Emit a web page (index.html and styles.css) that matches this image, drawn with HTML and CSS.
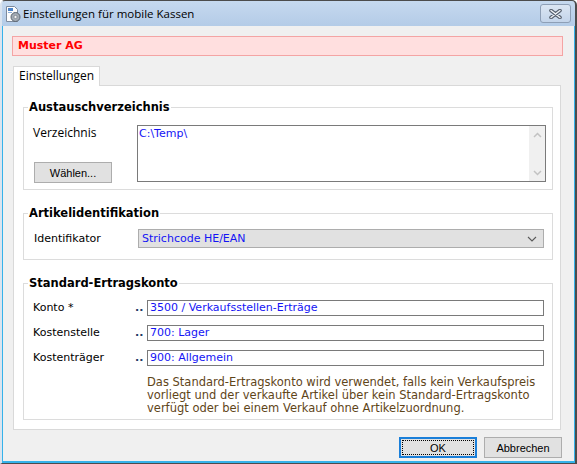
FILE: index.html
```html
<!DOCTYPE html>
<html lang="de">
<head>
    <meta charset="UTF-8">
    <title>Einstellungen für mobile Kassen</title>
    <link rel="stylesheet" href="styles.css">
</head>
<body>
    <div class="window">
        <div class="titlebar">
            <svg class="app-icon" width="16" height="16" viewBox="0 0 16 16">
                <path d="M1.5 0.5 H9.5 L12.5 3.5 V15.5 H1.5 Z" fill="#fdfdfd" stroke="#7d8a9c"/>
                <rect x="3" y="2" width="5" height="3" fill="#4d84c8"/>
                <rect x="3" y="6" width="4" height="1" fill="#8fb0d8"/>
                <circle cx="10.5" cy="11" r="4.5" fill="#a3abb4" stroke="#5b6570"/>
                <circle cx="10.5" cy="11" r="1.6" fill="#f4f4f4" stroke="#6b747e" stroke-width="0.6"/>
            </svg>
            <span class="title">Einstellungen für mobile Kassen</span>
            <div class="close-btn">
                <svg width="13" height="10" viewBox="0 0 13 10">
                    <path d="M2 1.5 L11 8.5 M11 1.5 L2 8.5" stroke="#56606e" stroke-width="3.6" stroke-linecap="round"/>
                    <path d="M2 1.5 L11 8.5 M11 1.5 L2 8.5" stroke="#eef1f5" stroke-width="1.4" stroke-linecap="round"/>
                </svg>
            </div>
        </div>

        <div class="client">
            <div class="company">Muster AG</div>

            <div class="tabs">
                <div class="tab active">Einstellungen</div>
            </div>

            <div class="tab-panel">
                <fieldset class="group">
                    <legend>Austauschverzeichnis</legend>
                    <div class="group-body dir-body">
                        <div class="dir-side">
                            <span class="label label-ui">Verzeichnis</span>
                            <button class="btn btn-choose">Wählen...</button>
                        </div>
                        <div class="memo">
                            <div class="memo-text">C:\Temp\</div>
                            <div class="memo-scroll">
                                <div class="scroll-arrow">
                                    <svg width="9" height="6" viewBox="0 0 9 6"><path d="M1 5 L4.5 1.5 L8 5" fill="none" stroke="#c2c2c2" stroke-width="1.5"/></svg>
                                </div>
                                <div class="scroll-arrow">
                                    <svg width="9" height="6" viewBox="0 0 9 6"><path d="M1 1 L4.5 4.5 L8 1" fill="none" stroke="#c2c2c2" stroke-width="1.5"/></svg>
                                </div>
                            </div>
                        </div>
                    </div>
                </fieldset>

                <fieldset class="group">
                    <legend>Artikelidentifikation</legend>
                    <div class="group-body ident-body">
                        <span class="label">Identifikator</span>
                        <div class="combo">
                            <span class="value">Strichcode HE/EAN</span>
                            <svg width="10" height="6" viewBox="0 0 10 6"><path d="M1 1 L5 5 L9 1" fill="none" stroke="#5a5a5a" stroke-width="1.1"/></svg>
                        </div>
                    </div>
                </fieldset>

                <fieldset class="group">
                    <legend>Standard-Ertragskonto</legend>
                    <div class="group-body konto-body">
                        <span class="label">Konto *</span>
                        <span class="dots">..</span>
                        <div class="field value">3500 / Verkaufsstellen-Erträge</div>

                        <span class="label">Kostenstelle</span>
                        <span class="dots">..</span>
                        <div class="field value">700: Lager</div>

                        <span class="label">Kostenträger</span>
                        <span class="dots">..</span>
                        <div class="field value">900: Allgemein</div>

                        <p class="hint">Das Standard-Ertragskonto wird verwendet, falls kein Verkaufspreis<br>vorliegt und der verkaufte Artikel über kein Standard-Ertragskonto<br>verfügt oder bei einem Verkauf ohne Artikelzuordnung.</p>
                    </div>
                </fieldset>
            </div>

            <div class="dialog-buttons">
                <button class="btn btn-ok">OK</button>
                <button class="btn">Abbrechen</button>
            </div>
        </div>
    </div>
</body>
</html>
```

FILE: styles.css
```css
* {
    box-sizing: border-box;
}
body {
    margin: 0;
    font-family: "DejaVu Sans", Verdana, sans-serif;
    font-size: 11px;
    color: #000;
    background: #fff;
}
.window {
    width: 577px;
    height: 464px;
    border: 1px solid #4c4c4c;
    border-left: 2px solid #dae4ef;
    border-right-width: 2px;
    border-radius: 5px 5px 0 0;
    display: flex;
    flex-direction: column;
    overflow: hidden;
    background: linear-gradient(#c6d9ef, #b3cbe7 26px);
}
.titlebar {
    height: 25px;
    display: flex;
    align-items: center;
    padding-left: 3px;
    flex-shrink: 0;
}
.app-icon {
    flex-shrink: 0;
}
.title {
    margin-left: 2px;
    font-family: "Open Sans", "Noto Sans", sans-serif;
    font-size: 11.5px;
    color: #000;
}
.close-btn {
    margin-left: auto;
    margin-right: 4px;
    width: 31px;
    height: 19px;
    border: 1px solid #8e9fb6;
    border-radius: 3px;
    background: linear-gradient(#dbe6f3, #c3d4ea);
    display: flex;
    align-items: center;
    justify-content: center;
}
.client {
    flex: 1;
    background: #f0f0f0;
    border: solid #35b2ea;
    border-width: 0 1px 2px 1px;
    display: flex;
    flex-direction: column;
}
.company {
    margin: 10px 11px 0 9px;
    height: 20px;
    border: 1px solid #f4a4a4;
    background: #ffdfdf;
    color: #ff0000;
    font-weight: bold;
    font-size: 11px;
    line-height: 18px;
    padding-left: 5px;
}
.tabs {
    margin: 10px 0 0 10px;
    display: flex;
}
.tab {
    height: 20px;
    margin-bottom: -1px;
    padding: 0 5px;
    border: 1px solid #d9d9d9;
    border-bottom: none;
    background: #fff;
    font-family: "Open Sans", "Noto Sans", sans-serif;
    font-size: 12px;
    line-height: 18px;
    position: relative;
}
.tab-panel {
    margin: 0 13px 0 10px;
    height: 345px;
    border: 1px solid #d9d9d9;
    background: #fff;
    padding: 14px 7px 0 9px;
}
.group {
    margin: 0 0 16px 0;
    padding: 0;
    border: 1px solid #dcdcdc;
    min-width: 0;
}
.group legend {
    margin-left: 4px;
    padding: 0 1px;
    font-weight: bold;
    font-size: 11.5px;
    line-height: 14px;
}
.label {
    line-height: 16px;
}
.label-ui {
    font-family: "Open Sans", "Noto Sans", sans-serif;
    font-size: 12px;
}
.value {
    color: #1414f5;
}
.btn {
    height: 21px;
    width: 78px;
    border: 1px solid #adadad;
    background: #e1e1e1;
    font-family: "Liberation Sans", Arial, sans-serif;
    font-size: 11px;
    color: #000;
    padding: 0;
}
.dir-body {
    display: grid;
    grid-template-columns: 104px 1fr;
    height: 75px;
    padding: 11px 6px 6px 9px;
}
.dir-side {
    display: flex;
    flex-direction: column;
    align-items: flex-start;
}
.btn-choose {
    margin-top: auto;
    margin-left: 1px;
}
.memo {
    height: 57px;
    border: 1px solid #7a7a7a;
    display: flex;
}
.memo-text {
    flex: 1;
    padding: 1px 1px;
    line-height: 14px;
    color: #1414f5;
}
.memo-scroll {
    width: 16px;
    background: #f0f0f0;
    display: flex;
    flex-direction: column;
    justify-content: space-between;
}
.scroll-arrow {
    height: 17px;
    display: flex;
    align-items: center;
    justify-content: center;
}
.ident-body {
    display: grid;
    grid-template-columns: 105px 1fr;
    align-items: center;
    padding: 9px 8px 11px 9px;
}
.ident-body .label {
    padding-left: 1px;
}
.combo {
    height: 19px;
    border: 1px solid #adadad;
    background: #e1e1e1;
    display: flex;
    align-items: center;
    justify-content: space-between;
    padding: 0 6px 0 3px;
}
.konto-body {
    display: grid;
    grid-template-columns: 102px 12px 1fr;
    row-gap: 9px;
    align-items: center;
    padding: 10px 8px 4px 9px;
}
.dots {
    font-weight: bold;
    color: #1f3a66;
    line-height: 16px;
}
.field {
    height: 16px;
    border: 1px solid #7a7a7a;
    padding-left: 2px;
    line-height: 14px;
    white-space: nowrap;
}
.hint {
    grid-column: 3;
    margin: 1px 0 0 0;
    font-size: 11.5px;
    line-height: 13px;
    color: #5f4519;
    white-space: nowrap;
}
.dialog-buttons {
    display: flex;
    justify-content: flex-end;
    gap: 7px;
    margin: 7px 12px 0 0;
}
.btn-ok {
    border: 2px solid #1a7fd9;
    outline: 1px dotted #000;
    outline-offset: -4px;
}
```
